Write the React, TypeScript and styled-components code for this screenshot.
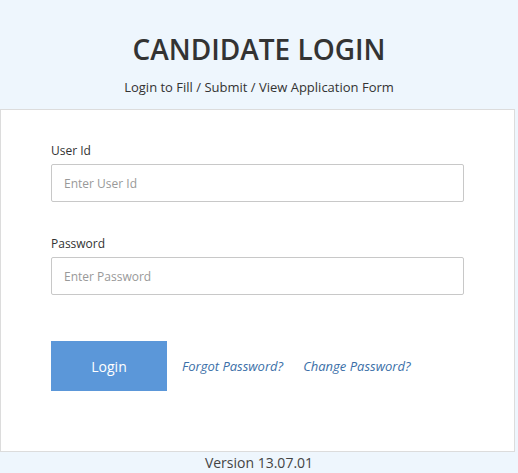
import React from "react";
import styled, { createGlobalStyle } from "styled-components";

const Global = createGlobalStyle`
  html, body { margin: 0; padding: 0; }
  body {
    background: #eef6fd;
    font-family: "Open Sans", "Noto Sans", sans-serif;
    color: #333;
  }
`;

const Page = styled.div`
  width: 518px;
  display: flex;
  flex-direction: column;
`;

const Header = styled.header`
  display: flex;
  flex-direction: column;
  align-items: center;
  padding-top: 30px;
  height: 79px;
`;

const Title = styled.h1`
  margin: 0;
  font-size: 28px;
  font-weight: 600;
  line-height: 38px;
  color: #333;
`;

const Subtitle = styled.p`
  margin: 11px 0 0;
  font-size: 13px;
  line-height: 17px;
  color: #333;
`;

const Card = styled.main`
  width: 515px;
  box-sizing: border-box;
  background: #fff;
  border: 1px solid #dcdcdc;
  padding: 33px 50px 60px;
  display: flex;
  flex-direction: column;
`;

const Field = styled.div<{ $mb: number }>`
  display: flex;
  flex-direction: column;
  margin-bottom: ${(p) => p.$mb}px;
`;

const Label = styled.label`
  font-size: 12px;
  line-height: 16px;
  color: #333;
  margin-bottom: 5px;
`;

const Input = styled.input`
  height: 38px;
  box-sizing: border-box;
  border: 1px solid #c8c8c8;
  border-radius: 2px;
  padding: 0 12px;
  font-family: "Open Sans", "Noto Sans", sans-serif;
  font-size: 12px;
  color: #333;
  outline: none;
  &::placeholder { color: #999; }
`;

const Actions = styled.div`
  display: flex;
  align-items: center;
`;

const Button = styled.button`
  width: 116px;
  height: 50px;
  border: none;
  background: #5b97d9;
  color: #fff;
  font-family: "Open Sans", "Noto Sans", sans-serif;
  font-size: 14px;
  margin-right: 15px;
  cursor: pointer;
`;

const Link = styled.a`
  font-size: 13px;
  font-style: italic;
  color: #3b6fa8;
  text-decoration: none;
  margin-right: 20px;
`;

const Version = styled.footer`
  text-align: center;
  font-size: 14px;
  line-height: 20px;
  color: #444;
  margin-top: 1px;
`;

export default function App() {
  return (
    <>
      <Global />
      <Page>
        <Header>
          <Title>CANDIDATE LOGIN</Title>
          <Subtitle>Login to Fill / Submit / View Application Form</Subtitle>
        </Header>
        <Card>
          <Field $mb={34}>
            <Label>User Id</Label>
            <Input placeholder="Enter User Id" />
          </Field>
          <Field $mb={46}>
            <Label>Password</Label>
            <Input type="password" placeholder="Enter Password" />
          </Field>
          <Actions>
            <Button>Login</Button>
            <Link href="#">Forgot Password?</Link>
            <Link href="#">Change Password?</Link>
          </Actions>
        </Card>
        <Version>Version 13.07.01</Version>
      </Page>
    </>
  );
}
